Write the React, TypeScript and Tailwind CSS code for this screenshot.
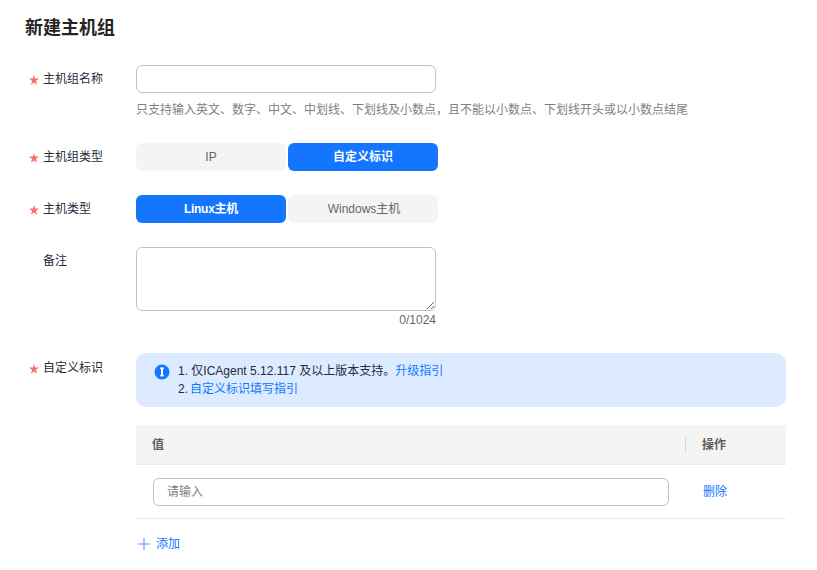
import React from 'react';

const font = '"Liberation Sans", "Noto Sans CJK SC", sans-serif';

const FieldLabel: React.FC<{ text: string; required?: boolean; className?: string }> = ({ text, required, className }) => (
  <div className={`w-[111px] shrink-0 flex items-center h-[28px] pl-[4px] ${className ?? ''}`}>
    <span className="w-[14px] shrink-0 flex">
      {required && (
        <svg width="10" height="10" viewBox="0 0 10 10" className="fill-[#f9706b] mt-[2px]">
          <path d="M5 0 L6.1 3.6 L10 3.6 L6.9 5.9 L8.1 9.8 L5 7.4 L1.9 9.8 L3.1 5.9 L0 3.6 L3.9 3.6 Z" />
        </svg>
      )}
    </span>
    <span className="text-[12px] text-[#252b3a]">{text}</span>
  </div>
);

const Segment: React.FC<{ label: string; active?: boolean; className?: string }> = ({ label, active, className }) => (
  <button
    className={`w-[150px] h-[28px] rounded-[6px] text-[12px] ${active ? 'bg-[#1476ff] text-white font-bold' : 'bg-[#f4f4f4] text-[#666666]'} ${className ?? ''}`}
  >
    {label}
  </button>
);

export default function App() {
  return (
    <div className="w-[817px] h-[570px] overflow-hidden bg-white px-[25px] pt-[17px]" style={{ fontFamily: font }}>
      <h1 className="text-[18px] leading-[22px] font-bold text-[#252525]">新建主机组</h1>

      <div className="flex mt-[26px]">
        <FieldLabel text="主机组名称" required />
        <div>
          <input className="block w-[300px] h-[28px] border border-[#c2c2c2] rounded-[6px] outline-none" />
          <p className="mt-[9px] text-[12px] leading-[16px] text-[#808080]">
            只支持输入英文、数字、中文、中划线、下划线及小数点，且不能以小数点、下划线开头或以小数点结尾
          </p>
        </div>
      </div>

      <div className="flex mt-[25px]">
        <FieldLabel text="主机组类型" required />
        <div className="flex gap-[2px]">
          <Segment label="IP" />
          <Segment label="自定义标识" active />
        </div>
      </div>

      <div className="flex mt-[24px]">
        <FieldLabel text="主机类型" required />
        <div className="flex gap-[2px]">
          <Segment label="Linux主机" active className="tracking-[-0.25px]" />
          <Segment label="Windows主机" className="pl-[2px]" />
        </div>
      </div>

      <div className="flex mt-[24px]">
        <FieldLabel text="备注" />
        <div className="w-[300px]">
          <textarea className="block w-[300px] h-[64px] border border-[#c2c2c2] rounded-[6px] outline-none" />
          <div className="text-right text-[12px] leading-[16px] mt-[1px] text-[#666666]">0/1024</div>
        </div>
      </div>

      <div className="flex mt-[25px]">
        <FieldLabel text="自定义标识" required className="mt-[1px]" />
        <div className="w-[650px]">
          <div className="h-[54px] rounded-[10px] bg-[#dcebff] pl-[18px] pt-[9px] flex text-[12px] leading-[18px] text-[#252b3a]">
            <svg width="16" height="16" viewBox="0 0 16 16" className="mt-[2px] shrink-0">
              <circle cx="8" cy="8" r="7.5" fill="#1476ff" />
              <rect x="6.2" y="3.4" width="3.6" height="1.6" fill="#fff" />
              <rect x="7" y="5" width="2" height="6" fill="#fff" />
              <rect x="6.2" y="10.8" width="3.6" height="1.6" fill="#fff" />
            </svg>
            <div className="ml-[8px]">
              <div>
                1. 仅ICAgent 5.12.117 及以上版本支持。<a className="text-[#1476ff]">升级指引</a>
              </div>
              <div>
                2.<a className="ml-[2px] text-[#1476ff]">自定义标识填写指引</a>
              </div>
            </div>
          </div>

          <div className="mt-[18px] text-[12px]">
            <div className="flex items-center h-[40px] bg-[#f4f4f4] border-b border-[#ebebeb] font-bold text-[#5e5e5e]">
              <div className="flex-1 pl-[16px]">值</div>
              <div className="w-[101px] h-[16px] border-l border-[#d9d9d9] pl-[16px] leading-[16px]">操作</div>
            </div>
            <div className="flex items-center h-[54px] border-b border-[#ebebeb]">
              <div className="pl-[17px]">
                <input
                  placeholder="请输入"
                  className="block w-[516px] h-[28px] border border-[#c2c2c2] rounded-[6px] px-[13px] outline-none placeholder:text-[#808080]"
                />
              </div>
              <a className="ml-[34px] text-[#1476ff]">删除</a>
            </div>
            <div className="flex items-center mt-[16px] h-[18px] text-[#1476ff]">
              <svg width="14" height="14" viewBox="0 0 14 14" className="ml-[1px]">
                <path d="M7 1v12M1 7h12" stroke="#5f9dff" strokeWidth="1.2" fill="none" />
              </svg>
              <span className="ml-[5px]">添加</span>
            </div>
          </div>
        </div>
      </div>
    </div>
  );
}
